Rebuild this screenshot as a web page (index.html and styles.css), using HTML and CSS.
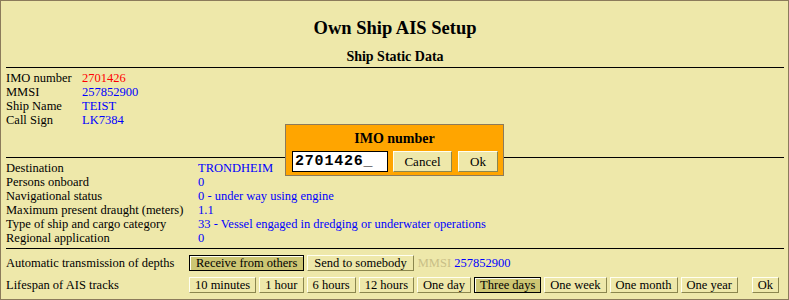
FILE: index.html
```html
<!DOCTYPE html>
<html lang="en">
<head>
    <meta charset="UTF-8">
    <title>Own Ship AIS Setup</title>
    <link rel="stylesheet" href="styles.css">
</head>
<body>
    <div class="panel">
        <h1 class="title">Own Ship AIS Setup</h1>
        <h2 class="subtitle">Ship Static Data</h2>

        <div class="section id-section">
            <div class="row"><span class="label">IMO number</span><span class="value red">2701426</span></div>
            <div class="row"><span class="label">MMSI</span><span class="value">257852900</span></div>
            <div class="row"><span class="label">Ship Name</span><span class="value">TEIST</span></div>
            <div class="row"><span class="label">Call Sign</span><span class="value">LK7384</span></div>
        </div>

        <div class="section voyage-section">
            <div class="row"><span class="label wide">Destination</span><span class="value">TRONDHEIM</span></div>
            <div class="row"><span class="label wide">Persons onboard</span><span class="value">0</span></div>
            <div class="row"><span class="label wide">Navigational status</span><span class="value">0 - under way using engine</span></div>
            <div class="row"><span class="label wide">Maximum present draught (meters)</span><span class="value">1.1</span></div>
            <div class="row"><span class="label wide">Type of ship and cargo category</span><span class="value">33 - Vessel engaged in dredging or underwater operations</span></div>
            <div class="row"><span class="label wide">Regional application</span><span class="value">0</span></div>
        </div>

        <div class="section options">
            <div class="opt-row">
                <span class="opt-label">Automatic transmission of depths</span>
                <div class="btn-group">
                    <button class="btn selected">Receive from others</button>
                    <button class="btn">Send to somebody</button>
                    <span class="mmsi"><span class="mmsi-label">MMSI</span> <span class="value">257852900</span></span>
                </div>
            </div>
            <div class="opt-row">
                <span class="opt-label">Lifespan of AIS tracks</span>
                <div class="btn-group">
                    <button class="btn">10 minutes</button>
                    <button class="btn">1 hour</button>
                    <button class="btn">6 hours</button>
                    <button class="btn">12 hours</button>
                    <button class="btn">One day</button>
                    <button class="btn selected">Three days</button>
                    <button class="btn">One week</button>
                    <button class="btn">One month</button>
                    <button class="btn">One year</button>
                </div>
                <button class="btn ok">Ok</button>
            </div>
        </div>

        <!-- input popup for the selected field -->
        <div class="dialog">
            <div class="dialog-title">IMO number</div>
            <div class="dialog-row">
                <div class="dialog-input">2701426_</div>
                <button class="btn dialog-btn cancel">Cancel</button>
                <button class="btn dialog-btn">Ok</button>
            </div>
        </div>
    </div>
</body>
</html>
```

FILE: styles.css
```css
* {
    margin: 0;
    padding: 0;
    box-sizing: border-box;
}

body {
    background-color: #eee8aa;
    font-family: 'Liberation Serif', 'Times New Roman', serif;
    color: #000;
    width: 789px;
    height: 300px;
    overflow: hidden;
}

.panel {
    position: relative;
    width: 789px;
    height: 300px;
    border: 1px solid #8b7b5b;
    padding: 0 4px 0 5px;
}

.title {
    font-size: 18.5px;
    font-weight: bold;
    text-align: center;
    line-height: 22px;
    margin-top: 16px;
}

.subtitle {
    font-size: 14px;
    font-weight: bold;
    text-align: center;
    line-height: 18px;
    margin-top: 9px;
    margin-bottom: 1px;
}

.section {
    border-top: 1px solid #000;
    padding-top: 3px;
}

.id-section {
    height: 90px;
}

.voyage-section {
    height: 91px;
}

.row {
    display: flex;
    font-size: 12.5px;
    line-height: 14px;
}

.label {
    width: 76px;
    flex-shrink: 0;
}

.label.wide {
    width: 192px;
}

.value {
    color: #0000ff;
}

.value.red {
    color: #ff0000;
}

.options {
    padding-top: 6px;
}

.opt-row {
    display: flex;
    align-items: center;
    height: 16px;
    margin-bottom: 6px;
    font-size: 12.5px;
}

.opt-label {
    width: 183px;
    flex-shrink: 0;
}

.btn-group {
    display: flex;
    align-items: center;
    gap: 3px;
}

.btn {
    height: 16px;
    padding: 0 5px;
    font-family: 'Liberation Serif', 'Times New Roman', serif;
    font-size: 12.5px;
    line-height: 14px;
    color: #000;
    background-color: #eee8aa;
    border: 1px solid;
    border-color: #fffff0 #8b864e #8b864e #fffff0;
}

.btn.selected {
    background-color: #cdc673;
    border-color: #000;
    box-shadow: inset 1px 1px 0 #fffff0;
}

.opt-row:first-child .btn {
    padding: 0 6px;
}

.btn.ok {
    margin-left: auto;
    margin-right: 5px;
}

.mmsi {
    margin-left: 1px;
}

.mmsi-label {
    color: #c9bf87;
}

.dialog {
    position: absolute;
    left: 284px;
    top: 123px;
    width: 219px;
    height: 52px;
    background-color: #ffa500;
    border: 1px solid #8b7b5b;
}

.dialog-title {
    font-size: 14px;
    font-weight: bold;
    text-align: center;
    line-height: 18px;
    margin-top: 5px;
}

.dialog-row {
    display: flex;
    margin-top: 3px;
    padding-left: 6px;
}

.dialog-input {
    width: 96px;
    height: 21px;
    background-color: #fff;
    border: 1px solid #000;
    padding-left: 2px;
    font-family: 'Liberation Mono', 'Courier New', monospace;
    font-size: 15px;
    font-weight: bold;
    letter-spacing: 0.8px;
    line-height: 19px;
}

.dialog-btn {
    height: 21px;
    font-size: 13px;
    margin-left: 6px;
    width: 40px;
    padding: 0;
}

.dialog-btn.cancel {
    margin-left: 5px;
    width: 59px;
}
```
